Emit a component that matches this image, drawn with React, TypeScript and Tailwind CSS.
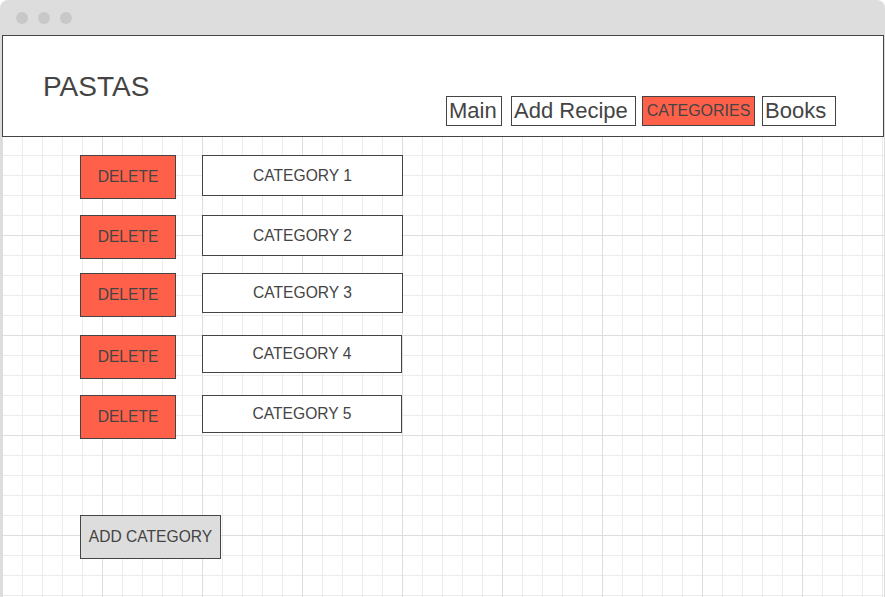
const rows = [
  { label: 'CATEGORY 1', rowClass: 'mt-[18px]', catClass: 'h-[41px] w-[201px]' },
  { label: 'CATEGORY 2', rowClass: 'mt-[16px]', catClass: 'h-[41px] w-[201px]' },
  { label: 'CATEGORY 3', rowClass: 'mt-[14px]', catClass: 'h-[40px] w-[201px]' },
  { label: 'CATEGORY 4', rowClass: 'mt-[18px]', catClass: 'h-[38px] w-[200px]' },
  { label: 'CATEGORY 5', rowClass: 'mt-[16px]', catClass: 'h-[38px] w-[200px]' },
]

const gridBg =
  'bg-[linear-gradient(to_right,#dedede_1px,transparent_1px),linear-gradient(to_bottom,#dedede_1px,transparent_1px),linear-gradient(to_right,#ececec_1px,transparent_1px),linear-gradient(to_bottom,#ececec_1px,transparent_1px)] bg-[size:100px_100px,100px_100px,20px_20px,20px_20px]'

function NavLink({ label, className }: { label: string; className: string }) {
  return (
    <a
      href="#"
      className={`h-[30px] border border-[#444] bg-white pl-[2px] text-[22px] leading-[28px] text-[#444] ${className}`}
    >
      {label}
    </a>
  )
}

export default function App() {
  return (
    <div className="h-[597px] w-[885px] overflow-hidden bg-white font-['Liberation_Sans',Arial,sans-serif] text-[#444]">
      <div className="flex h-full flex-col rounded-t-[8px] bg-[#dddddd] pl-[2px] pr-[1px]">
        {/* title bar */}
        <div className="flex h-[35px] shrink-0 items-center gap-[10px] pl-[14px]">
          <span className="h-[12px] w-[12px] rounded-full bg-[#c8c8c8]" />
          <span className="h-[12px] w-[12px] rounded-full bg-[#c8c8c8]" />
          <span className="h-[12px] w-[12px] rounded-full bg-[#c8c8c8]" />
        </div>

        <div className={`flex-1 bg-white ${gridBg}`}>
          {/* header */}
          <header className="flex h-[102px] items-start border border-[#444] bg-white">
            <h1 className="ml-[40px] mt-[37px] text-[28px] leading-none font-normal">PASTAS</h1>
            <nav className="ml-auto mr-[47px] mt-[60px] flex items-start">
              <NavLink label="Main" className="w-[56px]" />
              <NavLink label="Add Recipe" className="ml-[9px] w-[125px]" />
              <a
                href="#"
                className="ml-[6px] flex h-[30px] w-[113px] items-center justify-center border border-[#444] bg-[#ff604a] text-[16px] text-[#444]"
              >
                CATEGORIES
              </a>
              <NavLink label="Books" className="ml-[7px] w-[74px]" />
            </nav>
          </header>

          {/* categories */}
          <div className="flex flex-col pl-[78px]">
            {rows.map((row) => (
              <div key={row.label} className={`flex items-start gap-[26px] ${row.rowClass}`}>
                <button className="flex h-[44px] w-[96px] items-center justify-center border border-[#444] bg-[#ff604a] text-[15.6px] text-[#444]">
                  DELETE
                </button>
                <div
                  className={`flex items-center justify-center border border-[#444] bg-white text-[15.6px] text-[#444] ${row.catClass}`}
                >
                  {row.label}
                </div>
              </div>
            ))}
            <div className="mt-[76px]">
              <button className="flex h-[44px] w-[141px] items-center justify-center border border-[#444] bg-[#dddddd] text-[15.6px] text-[#444]">
                ADD CATEGORY
              </button>
            </div>
          </div>
        </div>
      </div>
    </div>
  )
}
